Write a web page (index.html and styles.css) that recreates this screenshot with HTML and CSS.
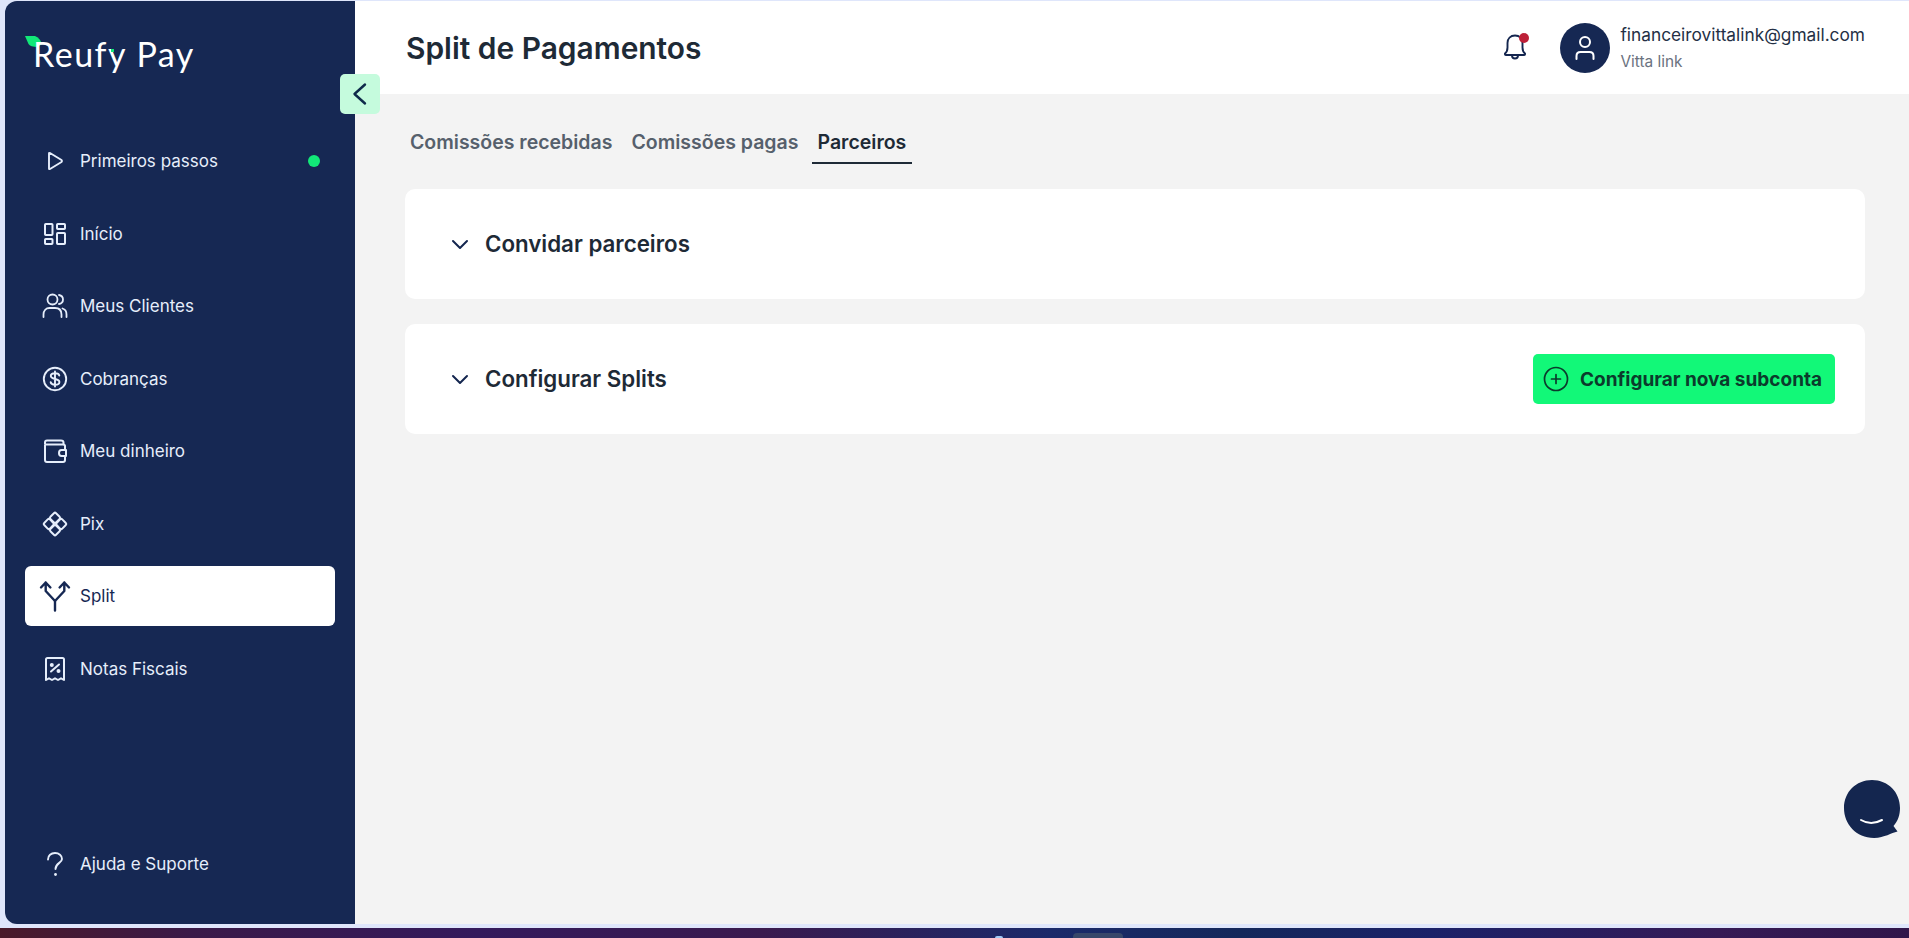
FILE: index.html
```html
<!DOCTYPE html>
<html lang="pt-BR">
<head>
<meta charset="utf-8">
<title>Split de Pagamentos</title>
<link rel="stylesheet" href="styles.css">
</head>
<body>
<div class="app">
  <aside class="sidebar">
    <div class="logo">
      <svg class="leaf" width="18" height="12" viewBox="0 0 18 12"><path d="M0 0H10Q15 2 17 8L13 11Q5 11 3.500 8Z" fill="#12e878"/></svg>
      <span class="logo-text">Reufy Pay</span>
      <i class="logo-tick"></i>
    </div>
    <button class="toggle" aria-label="Recolher">
      <svg width="40" height="40" viewBox="0 0 40 40"><path d="M25 11L14.500 20.500L25 30" transform="translate(0 -.5)" fill="none" stroke="#0f2a4a" stroke-width="2.400" stroke-linecap="round" stroke-linejoin="round"/></svg>
    </button>
    <nav class="nav">
      <a class="item"><span class="ico"><svg width="28" height="28" viewBox="0 0 28 28" fill="none" stroke="currentColor" stroke-width="1.900" stroke-linejoin="round"><path d="M8 6.500V21.500Q8 22.500 9 22L20.500 15Q21.500 14 20.500 13L9 6Q8 5.500 8 6.500Z"/></svg></span><span class="label">Primeiros passos</span><i class="dot"></i></a>
      <a class="item"><span class="ico"><svg width="28" height="28" viewBox="0 0 28 28" fill="none" stroke="currentColor" stroke-width="2" stroke-linejoin="round"><rect x="4" y="4" width="7.500" height="11" rx=".8"/><rect x="16" y="4" width="8" height="5" rx=".8"/><rect x="4" y="19" width="7.500" height="5" rx=".8"/><rect x="16" y="13" width="8" height="11" rx=".8"/></svg></span><span class="label">Início</span></a>
      <a class="item"><span class="ico"><svg width="28" height="28" viewBox="0 0 28 28" fill="none" stroke="currentColor" stroke-width="1.800" stroke-linecap="round"><circle cx="11.500" cy="7.500" r="5"/><path d="M2.500 25V22.500C2.500 18.500 5 16 8.500 16H14C18 16 20.500 18.500 20.500 22.500V25"/><path d="M18 3C20.500 3.500 22 5.300 22 7.500S20.500 11.500 18 12"/><path d="M21.500 16.500C24 17.200 25.500 19.500 25.500 22.500V25"/></svg></span><span class="label">Meus Clientes</span></a>
      <a class="item"><span class="ico"><svg width="28" height="28" viewBox="0 0 28 28" fill="none" stroke="currentColor" stroke-width="1.900" stroke-linecap="round"><circle cx="14" cy="14" r="11.200"/><path d="M18.300 10.500C18 9 16.500 8.300 14 8.300C11.500 8.300 9.800 9.300 9.800 11.100C9.800 15 18.400 13 18.400 16.900C18.400 18.800 16.500 19.700 14 19.700C11.500 19.700 10 18.800 9.700 17.300M14 6.500V21.500"/></svg></span><span class="label">Cobranças</span></a>
      <a class="item"><span class="ico"><svg width="28" height="28" viewBox="0 0 28 28" fill="none" stroke="currentColor" stroke-width="2" stroke-linejoin="round"><path d="M4 7.500V23Q4 25 6 25H22Q24 25 24 23V19M24 13V9Q24 7.500 22 7.500H4"/><path d="M4 7.500V5.500Q4 3.500 6 3.500H20Q22.500 3.500 22.500 5.500V7.500"/><path d="M25 13H20.500Q18 13 18 16Q18 19 20.500 19H25Z"/></svg></span><span class="label">Meu dinheiro</span></a>
      <a class="item"><span class="ico"><svg width="28" height="28" viewBox="0 0 28 28" fill="none" stroke="currentColor" stroke-width="2" stroke-linejoin="round"><rect x="10" y="3.800" width="8" height="8" rx="1.500" transform="rotate(45 14 7.800)"/><rect x="10" y="16.200" width="8" height="8" rx="1.500" transform="rotate(45 14 20.200)"/><rect x="3.800" y="10" width="8" height="8" rx="1.500" transform="rotate(45 7.800 14)"/><rect x="16.200" y="10" width="8" height="8" rx="1.500" transform="rotate(45 20.200 14)"/></svg></span><span class="label">Pix</span></a>
      <a class="item active"><span class="ico"><svg width="32" height="32" viewBox="0 0 32 32" fill="none" stroke="currentColor" stroke-width="2.400" stroke-linecap="round" stroke-linejoin="round"><path d="M16 30.500V21L6.700 11V2.500M2 7.500L6.700 2.500L11.400 7.500"/><path d="M16 21L25.300 11V2.500M20.600 7.500L25.300 2.500L30 7.500"/></svg></span><span class="label">Split</span></a>
      <a class="item"><span class="ico"><svg width="28" height="28" viewBox="0 0 28 28" fill="none" stroke="currentColor" stroke-width="2" stroke-linecap="round" stroke-linejoin="round"><path d="M5 25V4.500Q5 3 6.500 3H21.500Q23 3 23 4.500V25L20 23.300L17 25L14 23.300L11 25L8 23.300Z"/><path d="M10 16.500L18 9.500"/><circle cx="10.800" cy="10" r="1" fill="currentColor"/><circle cx="17.500" cy="16" r="1" fill="currentColor"/></svg></span><span class="label">Notas Fiscais</span></a>
    </nav>
    <a class="item help"><span class="ico"><svg width="28" height="28" viewBox="0 0 28 28" fill="none" stroke="currentColor" stroke-width="1.900" stroke-linecap="round"><path d="M7 9.500C7 5.500 10 3 14 3C18 3 21 5.500 21 9C21 13 14.500 13 14.500 19"/><circle cx="14.500" cy="24.500" r="1.400" fill="currentColor" stroke="none"/></svg></span><span class="label">Ajuda e Suporte</span></a>
  </aside>
  <main class="main">
    <header class="topbar">
      <h1 class="title">Split de Pagamentos</h1>
      <div class="top-right">
        <span class="bell">
          <svg width="28" height="30" viewBox="0 0 28 30" fill="none" stroke="#14264f" stroke-width="1.900" stroke-linejoin="round" stroke-linecap="round"><path d="M4 22.500Q6.500 20.500 6.500 16.500V12C6.500 7.500 9.500 4.500 14 4.500C18.500 4.500 21.500 7.500 21.500 12V16.500Q21.500 20.500 24 22.500Q24.300 24 23 24H5Q3.700 24 4 22.500Z"/><path d="M11 24.500Q11 27.500 14 27.500Q17 27.500 17 24.500"/></svg>
          <i class="bell-dot"></i>
        </span>
        <span class="avatar">
          <svg width="26" height="30" viewBox="0 0 26 30" fill="none" stroke="#fff" stroke-width="2" stroke-linecap="round"><circle cx="13" cy="9" r="5"/><path d="M4.500 26V23Q4.500 19 8.500 19H17.500Q21.500 19 21.500 23V26"/></svg>
        </span>
        <div class="user">
          <div class="email">financeirovittalink@gmail.com</div>
          <div class="company">Vitta link</div>
        </div>
      </div>
    </header>
    <section class="content">
      <div class="tabs">
        <a class="tab">Comissões recebidas</a>
        <a class="tab">Comissões pagas</a>
        <a class="tab current">Parceiros</a>
      </div>
      <div class="card">
        <div class="card-left">
          <svg width="24" height="24" viewBox="0 0 24 24" fill="none" stroke="#14264f" stroke-width="2" stroke-linecap="round" stroke-linejoin="round"><path d="M5 9L12 16L19 9"/></svg>
          <h2 class="card-title">Convidar parceiros</h2>
        </div>
      </div>
      <div class="card">
        <div class="card-left">
          <svg width="24" height="24" viewBox="0 0 24 24" fill="none" stroke="#14264f" stroke-width="2" stroke-linecap="round" stroke-linejoin="round"><path d="M5 9L12 16L19 9"/></svg>
          <h2 class="card-title">Configurar Splits</h2>
        </div>
        <button class="cta">
          <svg width="26" height="26" viewBox="0 0 26 26" fill="none" stroke="#0b3b2c" stroke-width="1.700" stroke-linecap="round"><circle cx="13" cy="13" r="11.500"/><path d="M13 8.500V17.500M8.500 13H17.500"/></svg>
          <span>Configurar nova subconta</span>
        </button>
      </div>
    </section>
  </main>
</div>
<div class="taskbar">
  <i class="tray-icon"></i>
  <i class="tray-tab"></i>
</div>
<div class="chat">
  <svg width="58" height="60" viewBox="0 0 58 60"><path d="M29 1C45 1 57 13 57 29C57 36 55 42 50.500 47L54.500 52.500C48 54 42 58.500 31 59C13 59 1 45 1 29C1 13 13 1 29 1Z" fill="#14264f"/><path d="M18 41Q28 47 39 41" fill="none" stroke="#fff" stroke-width="2" stroke-linecap="round"/></svg>
</div>
</body>
</html>
```

FILE: styles.css
```css
* { box-sizing: border-box; }
html, body { margin: 0; height: 100%; overflow: hidden; }
body {
  background: #dfe6fb;
  padding-top: 1px;
  font-family: "Inter", "Liberation Sans", sans-serif;
  color: #1e2a36;
  display: flex;
  flex-direction: column;
}
.app {
  height: 923px;
  padding-left: 5px;
  display: flex;
}
.sidebar {
  position: relative;
  width: 350px;
  flex: none;
  background: #162853;
  border-radius: 12px 0 0 12px;
  display: flex;
  flex-direction: column;
  padding: 0 20px;
}
.logo {
  position: relative;
  height: 130px;
  padding: 29px 0 0 8px;
}
.leaf { position: absolute; left: 0; top: 35px; }
.logo-tick {
  position: absolute;
  left: 86px;
  top: 48px;
  width: 3px;
  height: 3px;
  background: #12e878;
}
.logo-text {
  position: relative;
  font-family: "Lato", sans-serif;
  font-weight: 400;
  font-size: 34px;
  line-height: 48px;
  color: #fff;
  letter-spacing: 1.500px;
  white-space: nowrap;
}
.toggle {
  position: absolute;
  right: -25px;
  top: 73px;
  width: 40px;
  height: 40px;
  border: 0;
  padding: 0;
  background: #c5fbdd;
  border-radius: 5px;
  z-index: 2;
}
.toggle svg { display: block; }
.nav { display: flex; flex-direction: column; gap: 12.500px; }
.item {
  height: 60px;
  padding-left: 16px;
  border-radius: 6px;
  display: flex;
  align-items: center;
  color: #e6eefb;
  font-size: 17px;
}
.ico {
  width: 28px;
  height: 32px;
  margin-right: 11px;
  display: flex;
  align-items: center;
  justify-content: center;
  flex: none;
}
.ico svg { flex: none; }
.label { white-space: nowrap; }
.dot {
  width: 12px;
  height: 12px;
  background: #12e878;
  border-radius: 50%;
  margin-left: auto;
  margin-right: 15px;
}
.item.active { background: #fff; color: #162853; }
.help { margin-top: auto; margin-bottom: 30px; }
.main {
  flex: 1;
  display: flex;
  flex-direction: column;
  background: #f3f3f3;
  min-width: 0;
}
.topbar {
  height: 93px;
  flex: none;
  background: #fff;
  padding: 0 44px 0 51px;
  display: flex;
  align-items: center;
  justify-content: space-between;
}
.title {
  margin: 1px 0 0;
  font-size: 29.900px;
  font-weight: 600;
  color: #1e2a36;
}
.top-right { display: flex; align-items: center; }
.bell {
  position: relative;
  width: 28px;
  height: 30px;
  margin-right: 31px;
  margin-bottom: 4px;
}
.bell svg { display: block; }
.bell-dot {
  position: absolute;
  right: 0;
  top: 2.500px;
  width: 10px;
  height: 10px;
  background: #bd2038;
  border-radius: 50%;
}
.avatar {
  width: 50px;
  height: 50px;
  border-radius: 50%;
  background: #162853;
  display: flex;
  align-items: center;
  justify-content: center;
  margin-right: 10px;
}
.email { font-size: 17.300px; line-height: 24px; color: #243045; margin-top: 1px; }
.company { font-size: 15.400px; line-height: 24px; color: #6b7280; margin-top: 3px; }
.content {
  flex: 1;
  padding: 22px 44px 0 50px;
  display: flex;
  flex-direction: column;
}
.tabs {
  display: flex;
  align-items: flex-start;
  margin-bottom: 25px;
  height: 48px;
}
.tab {
  padding: 14px 5px 8px;
  font-size: 19.500px;
  line-height: 24px;
  font-weight: 600;
  color: #56606c;
  margin-right: 9px;
  white-space: nowrap;
}
.tab.current { color: #1e2a36; border-bottom: 2px solid #1e2a36; margin-right: 0; padding-right: 6px; }
.card {
  height: 110px;
  background: #fff;
  border-radius: 10px;
  margin-bottom: 25px;
  padding: 0 30px 0 43px;
  display: flex;
  align-items: center;
  justify-content: space-between;
}
.card-left { display: flex; align-items: center; gap: 13px; }
.card-left svg { flex: none; }
.card-title {
  margin: 0 0 1px;
  font-size: 22.300px;
  font-weight: 600;
  color: #1e2a36;
}
.cta {
  width: 302px;
  height: 50px;
  border: 0;
  border-radius: 5px;
  background: #12f878;
  display: flex;
  align-items: center;
  gap: 11px;
  padding: 0 10px;
  font-family: inherit;
  font-size: 19px;
  font-weight: 700;
  color: #0b3b2c;
  white-space: nowrap;
}
.cta svg { flex: none; }
.taskbar {
  flex: 1;
  margin-top: 4px;
  background: linear-gradient(90deg, #4a1a2a 0%, #3b1a48 10%, #341a5c 25%, #3a1a4e 40%, #1b2a6a 55%, #14285a 65%, #1b2168 75%, #361a55 90%, #30164a 100%);
  display: flex;
  align-items: flex-end;
  padding-left: 995px;
  overflow: hidden;
}
.tray-icon { width: 8px; height: 2px; background: #9fc8f5; border-radius: 2px 2px 0 0; }
.tray-tab { width: 50px; height: 5px; margin-left: 70px; background: #37476a; border-radius: 4px 4px 0 0; }
.chat {
  position: absolute;
  left: 1843px;
  top: 779px;
  width: 58px;
  height: 60px;
}
.chat svg { display: block; }
```
